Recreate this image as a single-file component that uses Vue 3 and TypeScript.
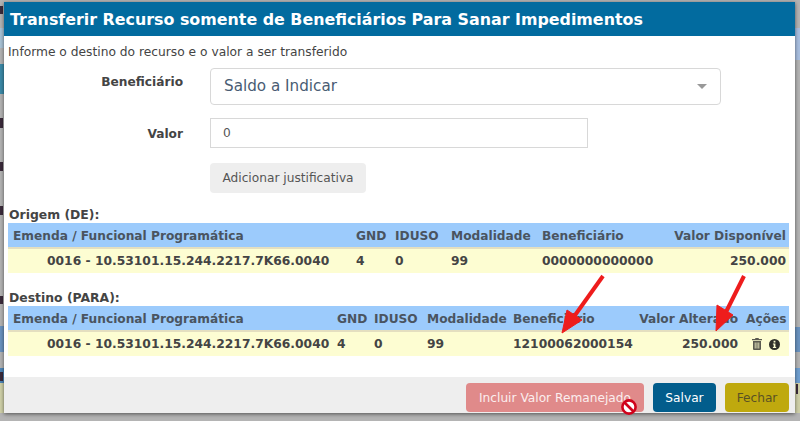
<script setup lang="ts">
interface Col { key: string; label: string; right?: boolean }
const origemCols: Col[] = [
  { key: 'a', label: 'Emenda / Funcional Programática' },
  { key: 'g', label: 'GND' },
  { key: 'i', label: 'IDUSO' },
  { key: 'm', label: 'Modalidade' },
  { key: 'b', label: 'Beneficiário' },
  { key: 'v', label: 'Valor Disponível', right: true },
]
const destinoCols: Col[] = [
  { key: 'a', label: 'Emenda / Funcional Programática' },
  { key: 'g', label: 'GND' },
  { key: 'i', label: 'IDUSO' },
  { key: 'm', label: 'Modalidade' },
  { key: 'b', label: 'Beneficiário' },
  { key: 'v', label: 'Valor Alterado', right: true },
  { key: 'x', label: 'Ações' },
]
const emenda = '0016 - 10.53101.15.244.2217.7K66.0040'
</script>

<template>
  <div class="page">
    <div class="backdrop">
      <div class="strip left">
        <span class="b1"></span><span class="b2"></span><span class="b3"></span><span class="b4"></span><span class="b5"></span>
        <span class="l l1"></span><span class="l l2"></span><span class="l l3"></span><span class="l l4"></span><span class="l l5"></span><span class="l l6"></span>
      </div>
      <div class="strip right">
        <span class="r1"></span><span class="r2"></span><span class="r3"></span><span class="r4"></span>
        <span class="l r5"></span>
      </div>
    </div>
    <section class="modal">
      <header class="head">Transferir Recurso somente de Beneficiários Para Sanar Impedimentos</header>
      <div class="body">
        <p class="hint">Informe o destino do recurso e o valor a ser transferido</p>
        <div class="form">
          <div class="row r-sel">
            <label>Beneficiário</label>
            <div class="select"><span>Saldo a Indicar</span><i class="caret"></i></div>
          </div>
          <div class="row r-val">
            <label>Valor</label>
            <div class="input">0</div>
          </div>
          <div class="row r-btn">
            <label></label>
            <button class="just">Adicionar justificativa</button>
          </div>
        </div>

        <h4 class="cap first">Origem (DE):</h4>
        <div class="table origem">
          <div class="tr th">
            <span v-for="c in origemCols" :key="c.key" :class="[c.key, { right: c.right }]">{{ c.label }}</span>
          </div>
          <div class="tr td">
            <span class="a num">{{ emenda }}</span><span class="g">4</span><span class="i">0</span><span class="m">99</span><span class="b">0000000000000</span><span class="v right">250.000</span>
          </div>
        </div>

        <h4 class="cap second">Destino (PARA):</h4>
        <div class="table destino">
          <div class="tr th">
            <span v-for="c in destinoCols" :key="c.key" :class="[c.key, { right: c.right }]">{{ c.label }}</span>
          </div>
          <div class="tr td">
            <span class="a num">{{ emenda }}</span><span class="g">4</span><span class="i">0</span><span class="m">99</span><span class="b">12100062000154</span><span class="v right">250.000</span>
            <span class="x icons">
              <svg width="10" height="12" viewBox="0 0 10 12"><path fill="#5a5a50" d="M3.5 0h3l.5 1H10v1.2H0V1h3zM1 3h8v8a1 1 0 0 1-1 1H2a1 1 0 0 1-1-1z"/><path stroke="#fdfdd2" stroke-width=".8" d="M3.2 4.5v6M5 4.5v6M6.8 4.5v6"/></svg>
              <svg width="11" height="11" viewBox="0 0 11 11"><circle cx="5.5" cy="5.5" r="5.5" fill="#2f2f2a"/><path fill="#fdfdd2" d="M4.6 1.8h1.8v1.7H4.6zM3.9 4.4h2.5v3.7h.8v1H3.9v-1h.8V5.4h-.8z"/></svg>
            </span>
          </div>
        </div>

        <svg class="arrows" width="800" height="421" viewBox="0 0 800 421">
          <g fill="#ee1c1c" stroke="#ee1c1c" stroke-linejoin="round">
            <path stroke-width="4" fill="none" d="M603 276 L573 318"/>
            <path stroke-width="1" d="M562 333 L567 310 L582 320Z"/>
            <path stroke-width="4" fill="none" d="M744 276 L724 316"/>
            <path stroke-width="1" d="M716 331 L717 305 L733 315Z"/>
          </g>
        </svg>
      </div>
      <footer class="foot">
        <button class="btn disabled">Incluir Valor Remanejado
          <svg class="ban" width="18" height="18" viewBox="0 0 18 18"><circle cx="9" cy="9" r="6.6" fill="#fff" stroke="#d0021b" stroke-width="2.6"/><path stroke="#d0021b" stroke-width="2.6" d="M4.5 4.5l9 9"/></svg>
        </button>
        <button class="btn save">Salvar</button>
        <button class="btn close">Fechar</button>
      </footer>
    </section>
  </div>
</template>

<style>
html, body { margin: 0; padding: 0; overflow: hidden; }
</style>

<style scoped>
.page {
  position: relative;
  width: 800px;
  height: 421px;
  overflow: hidden;
  background: #b4b4b4;
  font-family: "DejaVu Sans", Verdana, sans-serif;
  color: #333;
}
.backdrop { position: absolute; inset: 0; }
.strip { position: absolute; top: 0; bottom: 0; display: block; }
.strip span { position: absolute; left: 0; right: 0; display: block; }
.strip.left { left: 0; width: 4px; }
.strip.right { right: 0; width: 5px; }
.b1 { top: 28px; height: 20px; background: #a9c3d6; }
.b2 { top: 64px; height: 30px; background: #3c8aa8; }
.b3 { top: 326px; height: 26px; background: #6a93c0; }
.b4 { top: 368px; height: 15px; background: #4d86b8; }
.b5 { top: 383px; height: 30px; background: #cfd0a8; }
.strip .l { background: #3a2a3a; right: 1px; }
.l1 { top: 6px; height: 8px; }
.l2 { top: 118px; height: 10px; }
.l3 { top: 162px; height: 9px; }
.l4 { top: 206px; height: 9px; }
.l5 { top: 296px; height: 8px; }
.l6 { top: 372px; height: 9px; }
.r1 { top: 28px; height: 32px; background: #a9bfe0; }
.r2 { top: 327px; height: 25px; background: #6a93c0; }
.r3 { top: 368px; height: 15px; background: #6f9fd0; }
.r4 { top: 383px; height: 30px; background: #cfd0a8; }
.strip .r5 { top: 384px; height: 10px; left: 1px; right: 2px; }

.modal {
  position: absolute;
  left: 4px;
  top: 2px;
  width: 791px;
  height: 411px;
  background: #fff;
  box-shadow: 0 1px 4px rgba(0, 0, 0, .55);
  display: flex;
  flex-direction: column;
}
.head {
  height: 34px;
  flex: none;
  box-sizing: border-box;
  padding: 8px 0 0 6px;
  background: #026b9f;
  color: #fff;
  font-size: 15.87px;
  line-height: 20px;
  font-weight: 700;
  white-space: nowrap;
}
.body { flex: 1; padding: 0 6px 0 4px; position: relative; }
.hint { margin: 0; padding: 8px 0 0 0; font-size: 12.25px; line-height: 16px; color: #444; }
.form { display: flex; flex-direction: column; }
.row { display: flex; align-items: flex-start; }
.row label {
  width: 175px;
  flex: none;
  text-align: right;
  font-size: 12.2px;
  font-weight: 700;
  color: #444;
}
.r-sel { margin-top: 8px; height: 50px; }
.r-sel label { line-height: 29px; }
.r-val { height: 45px; }
.r-val label { line-height: 32px; }
.select {
  width: 511px;
  margin-left: 27px;
  height: 37px;
  box-sizing: border-box;
  border: 1px solid #d8d8d8;
  border-radius: 4px;
  display: flex;
  align-items: center;
  justify-content: space-between;
  padding: 0 13px 2px 13px;
  font-size: 15.2px;
  color: #495c73;
}
.caret { width: 0; height: 0; border: 5px solid transparent; border-top: 5px solid #999; border-bottom: 0; margin-top: 2px; }
.input {
  width: 378px;
  margin-left: 27px;
  height: 30px;
  box-sizing: border-box;
  border: 1px solid #d8d8d8;
  padding: 0 0 0 12px;
  font-size: 12.2px;
  line-height: 29px;
  color: #555;
}
.just {
  margin-left: 27px;
  width: 156px;
  height: 30px;
  border: 0;
  border-radius: 4px;
  background: #eee;
  font: 12.2px "DejaVu Sans", Verdana, sans-serif;
  color: #555;
  padding: 0;
}
.cap { margin: 0; font-size: 12.4px; font-weight: 700; color: #444; line-height: 16px; margin-left: 1px; }
.cap.first { margin-top: 14px; }
.cap.second { margin-top: 17px; }
.table { width: 781px; }
.tr { display: flex; align-items: center; font-size: 12.3px; font-weight: 700; color: #444; white-space: nowrap; box-sizing: border-box; position: relative; }
.th { height: 26px; padding-top: 2px; font-size: 12.2px; background: #9ccbfc; border-bottom: 2px solid #e4dfc0; color: #4a5460; }
.td { height: 24px; background: #fdfdd2; }
.tr span { flex: none; }
.tr .right { text-align: right; }
.a { box-sizing: border-box; padding-left: 5px; }
.a.num { padding-left: 39px; }
.origem .a { width: 348px; }
.origem .g { width: 39px; }
.origem .i { width: 56px; }
.origem .m { width: 91px; }
.origem .b { width: 105px; }
.origem .v { width: 139px; }
.destino .a { width: 329px; }
.destino .g { width: 37px; }
.destino .i { width: 53px; }
.destino .m { width: 86px; }
.destino .b { width: 89px; }
.destino .v { width: 136px; }
.destino .x { width: 48px; padding-left: 8px; box-sizing: border-box; }
.destino .x.icons { display: flex; gap: 7px; align-items: center; padding-left: 14px; }
.arrows { position: absolute; left: -4px; top: -36px; pointer-events: none; }
.foot {
  height: 36px;
  flex: none;
  background: #eee;
  display: flex;
  justify-content: flex-end;
  gap: 9px;
  padding: 6px 6px 0 0;
  box-sizing: border-box;
}
.btn {
  height: 29px;
  border-radius: 4px;
  font: 12.2px "DejaVu Sans", Verdana, sans-serif;
  padding: 0;
  position: relative;
  border: 1px solid transparent;
}
.disabled { width: 178px; background: #e08a8a; color: #fbeeee; }
.save { width: 63px; background: #025d8c; color: #fff; }
.close { width: 64px; background: #bfa90e; color: #5a5224; }
.ban { position: absolute; right: 5px; top: 14px; }
</style>
